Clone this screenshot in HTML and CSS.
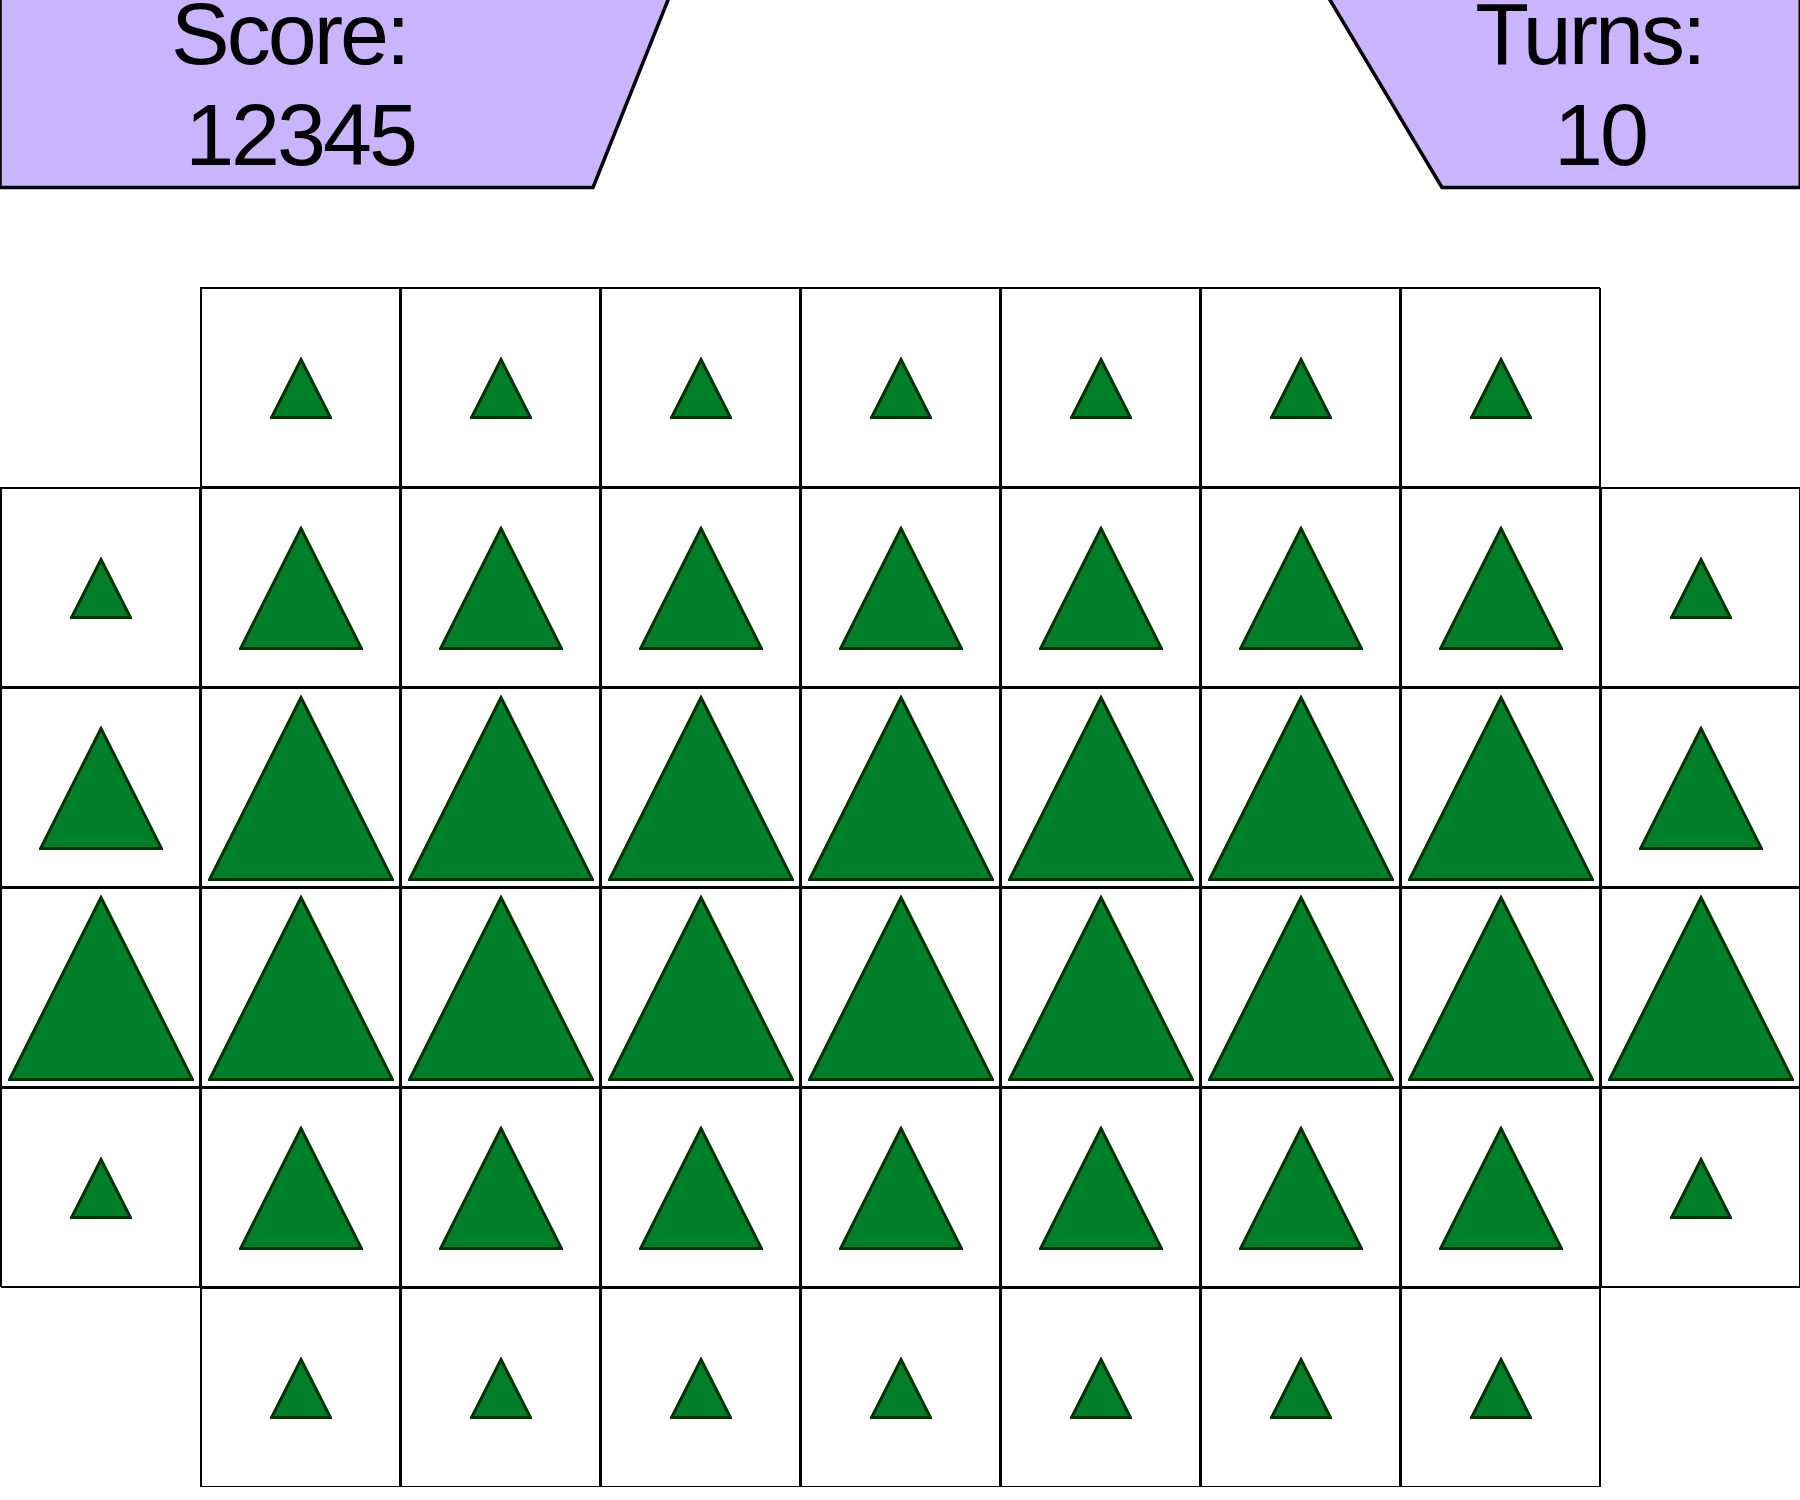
FILE: index.html
```html
<!DOCTYPE html>
<html lang="en">
<head>
  <title>Triangles</title>
  <meta name="viewport" content="width=device-width, initial-scale=1">
  <link rel="stylesheet" href="styles.css">
</head>
<body>
  <svg class="sprite">
    <symbol id="tri-s" viewBox="0 0 62 62"><polygon points="31,2.5 60.5,60.5 1.5,60.5"/></symbol>
    <symbol id="tri-m" viewBox="0 0 124 124"><polygon points="62,2.5 122.5,122.5 1.5,122.5"/></symbol>
    <symbol id="tri-l" viewBox="0 0 186 186"><polygon points="93,2.5 184.5,184.5 1.5,184.5"/></symbol>
  </svg>

  <div class="header">
    <div class="panel score">
      <svg class="panel-shape" width="672" height="190"><polygon points="0,-4 669.6,-4 593,187.5 0,187.5"/></svg>
      <div class="panel-text"><span class="line">Score: </span><span class="line">12345</span></div>
    </div>
    <div class="panel turns">
      <svg class="panel-shape" width="474" height="190"><polygon points="1.6,-4 480,-4 480,187.5 116,187.5"/><line x1="474" y1="-4" x2="474" y2="188"/></svg>
      <div class="panel-text"><span class="line">Turns: </span><span class="line">10</span></div>
    </div>
  </div>

  <div class="board">
    <!-- row 1 -->
    <div class="empty"></div>
    <div class="cell"><svg class="tri s"><use href="#tri-s"/></svg></div>
    <div class="cell"><svg class="tri s"><use href="#tri-s"/></svg></div>
    <div class="cell"><svg class="tri s"><use href="#tri-s"/></svg></div>
    <div class="cell"><svg class="tri s"><use href="#tri-s"/></svg></div>
    <div class="cell"><svg class="tri s"><use href="#tri-s"/></svg></div>
    <div class="cell"><svg class="tri s"><use href="#tri-s"/></svg></div>
    <div class="cell"><svg class="tri s"><use href="#tri-s"/></svg></div>
    <div class="empty"></div>

    <!-- row 2 -->
    <div class="cell"><svg class="tri s"><use href="#tri-s"/></svg></div>
    <div class="cell"><svg class="tri m"><use href="#tri-m"/></svg></div>
    <div class="cell"><svg class="tri m"><use href="#tri-m"/></svg></div>
    <div class="cell"><svg class="tri m"><use href="#tri-m"/></svg></div>
    <div class="cell"><svg class="tri m"><use href="#tri-m"/></svg></div>
    <div class="cell"><svg class="tri m"><use href="#tri-m"/></svg></div>
    <div class="cell"><svg class="tri m"><use href="#tri-m"/></svg></div>
    <div class="cell"><svg class="tri m"><use href="#tri-m"/></svg></div>
    <div class="cell"><svg class="tri s"><use href="#tri-s"/></svg></div>

    <!-- row 3 -->
    <div class="cell"><svg class="tri m"><use href="#tri-m"/></svg></div>
    <div class="cell"><svg class="tri l"><use href="#tri-l"/></svg></div>
    <div class="cell"><svg class="tri l"><use href="#tri-l"/></svg></div>
    <div class="cell"><svg class="tri l"><use href="#tri-l"/></svg></div>
    <div class="cell"><svg class="tri l"><use href="#tri-l"/></svg></div>
    <div class="cell"><svg class="tri l"><use href="#tri-l"/></svg></div>
    <div class="cell"><svg class="tri l"><use href="#tri-l"/></svg></div>
    <div class="cell"><svg class="tri l"><use href="#tri-l"/></svg></div>
    <div class="cell"><svg class="tri m"><use href="#tri-m"/></svg></div>

    <!-- row 4 -->
    <div class="cell"><svg class="tri l"><use href="#tri-l"/></svg></div>
    <div class="cell"><svg class="tri l"><use href="#tri-l"/></svg></div>
    <div class="cell"><svg class="tri l"><use href="#tri-l"/></svg></div>
    <div class="cell"><svg class="tri l"><use href="#tri-l"/></svg></div>
    <div class="cell"><svg class="tri l"><use href="#tri-l"/></svg></div>
    <div class="cell"><svg class="tri l"><use href="#tri-l"/></svg></div>
    <div class="cell"><svg class="tri l"><use href="#tri-l"/></svg></div>
    <div class="cell"><svg class="tri l"><use href="#tri-l"/></svg></div>
    <div class="cell"><svg class="tri l"><use href="#tri-l"/></svg></div>

    <!-- row 5 -->
    <div class="cell"><svg class="tri s"><use href="#tri-s"/></svg></div>
    <div class="cell"><svg class="tri m"><use href="#tri-m"/></svg></div>
    <div class="cell"><svg class="tri m"><use href="#tri-m"/></svg></div>
    <div class="cell"><svg class="tri m"><use href="#tri-m"/></svg></div>
    <div class="cell"><svg class="tri m"><use href="#tri-m"/></svg></div>
    <div class="cell"><svg class="tri m"><use href="#tri-m"/></svg></div>
    <div class="cell"><svg class="tri m"><use href="#tri-m"/></svg></div>
    <div class="cell"><svg class="tri m"><use href="#tri-m"/></svg></div>
    <div class="cell"><svg class="tri s"><use href="#tri-s"/></svg></div>

    <!-- row 6 -->
    <div class="empty"></div>
    <div class="cell"><svg class="tri s"><use href="#tri-s"/></svg></div>
    <div class="cell"><svg class="tri s"><use href="#tri-s"/></svg></div>
    <div class="cell"><svg class="tri s"><use href="#tri-s"/></svg></div>
    <div class="cell"><svg class="tri s"><use href="#tri-s"/></svg></div>
    <div class="cell"><svg class="tri s"><use href="#tri-s"/></svg></div>
    <div class="cell"><svg class="tri s"><use href="#tri-s"/></svg></div>
    <div class="cell"><svg class="tri s"><use href="#tri-s"/></svg></div>
    <div class="empty"></div>
  </div>
</body>
</html>
```

FILE: styles.css
```css
body {
  margin: 0;
  width: 1800px;
  font-family: "Liberation Sans", Arial, sans-serif;
  color: rgb(0, 0, 0);
  background-color: rgb(255, 255, 255);
  overflow: hidden;
}

.sprite {
  display: none;
}

.header {
  display: flex;
  justify-content: space-between;
  height: 189px;
}

.panel {
  position: relative;
  height: 189px;
}

.panel.score {
  width: 672px;
}

.panel.turns {
  width: 474px;
}

.panel-shape {
  position: absolute;
  top: 0;
  left: 0;
  overflow: hidden;
}

.panel-shape polygon {
  fill: rgb(203, 180, 254);
  stroke: rgb(0, 0, 0);
  stroke-width: 3.5;
}

.panel-shape line {
  stroke: rgb(0, 0, 0);
  stroke-width: 3;
}

.panel-text {
  position: relative;
  display: flex;
  flex-direction: column;
  align-items: center;
  font-size: 88px;
  line-height: 101px;
  letter-spacing: -3px;
  margin-top: -17px;
}

.line {
  white-space: pre;
}

.score .panel-text {
  width: 600px;
}

.turns .panel-text {
  width: 400px;
  margin-left: 74px;
}

.board {
  display: grid;
  grid-template-columns: repeat(9, 200px);
  grid-auto-rows: 200px;
  margin-top: 98px;
}

.cell {
  display: flex;
  align-items: center;
  justify-content: center;
  border-style: solid;
  border-color: rgb(0, 0, 0);
  border-width: 2px 1px 1px 2px;
  box-shadow: 1px 1px 0 0 rgb(0, 0, 0);
}

.tri {
  overflow: visible;
  fill: rgb(0, 127, 42);
  stroke: rgb(0, 51, 0);
  stroke-width: 3;
}

.tri.s {
  width: 62px;
  height: 62px;
}

.tri.m {
  width: 124px;
  height: 124px;
}

.tri.l {
  width: 186px;
  height: 186px;
}
```
